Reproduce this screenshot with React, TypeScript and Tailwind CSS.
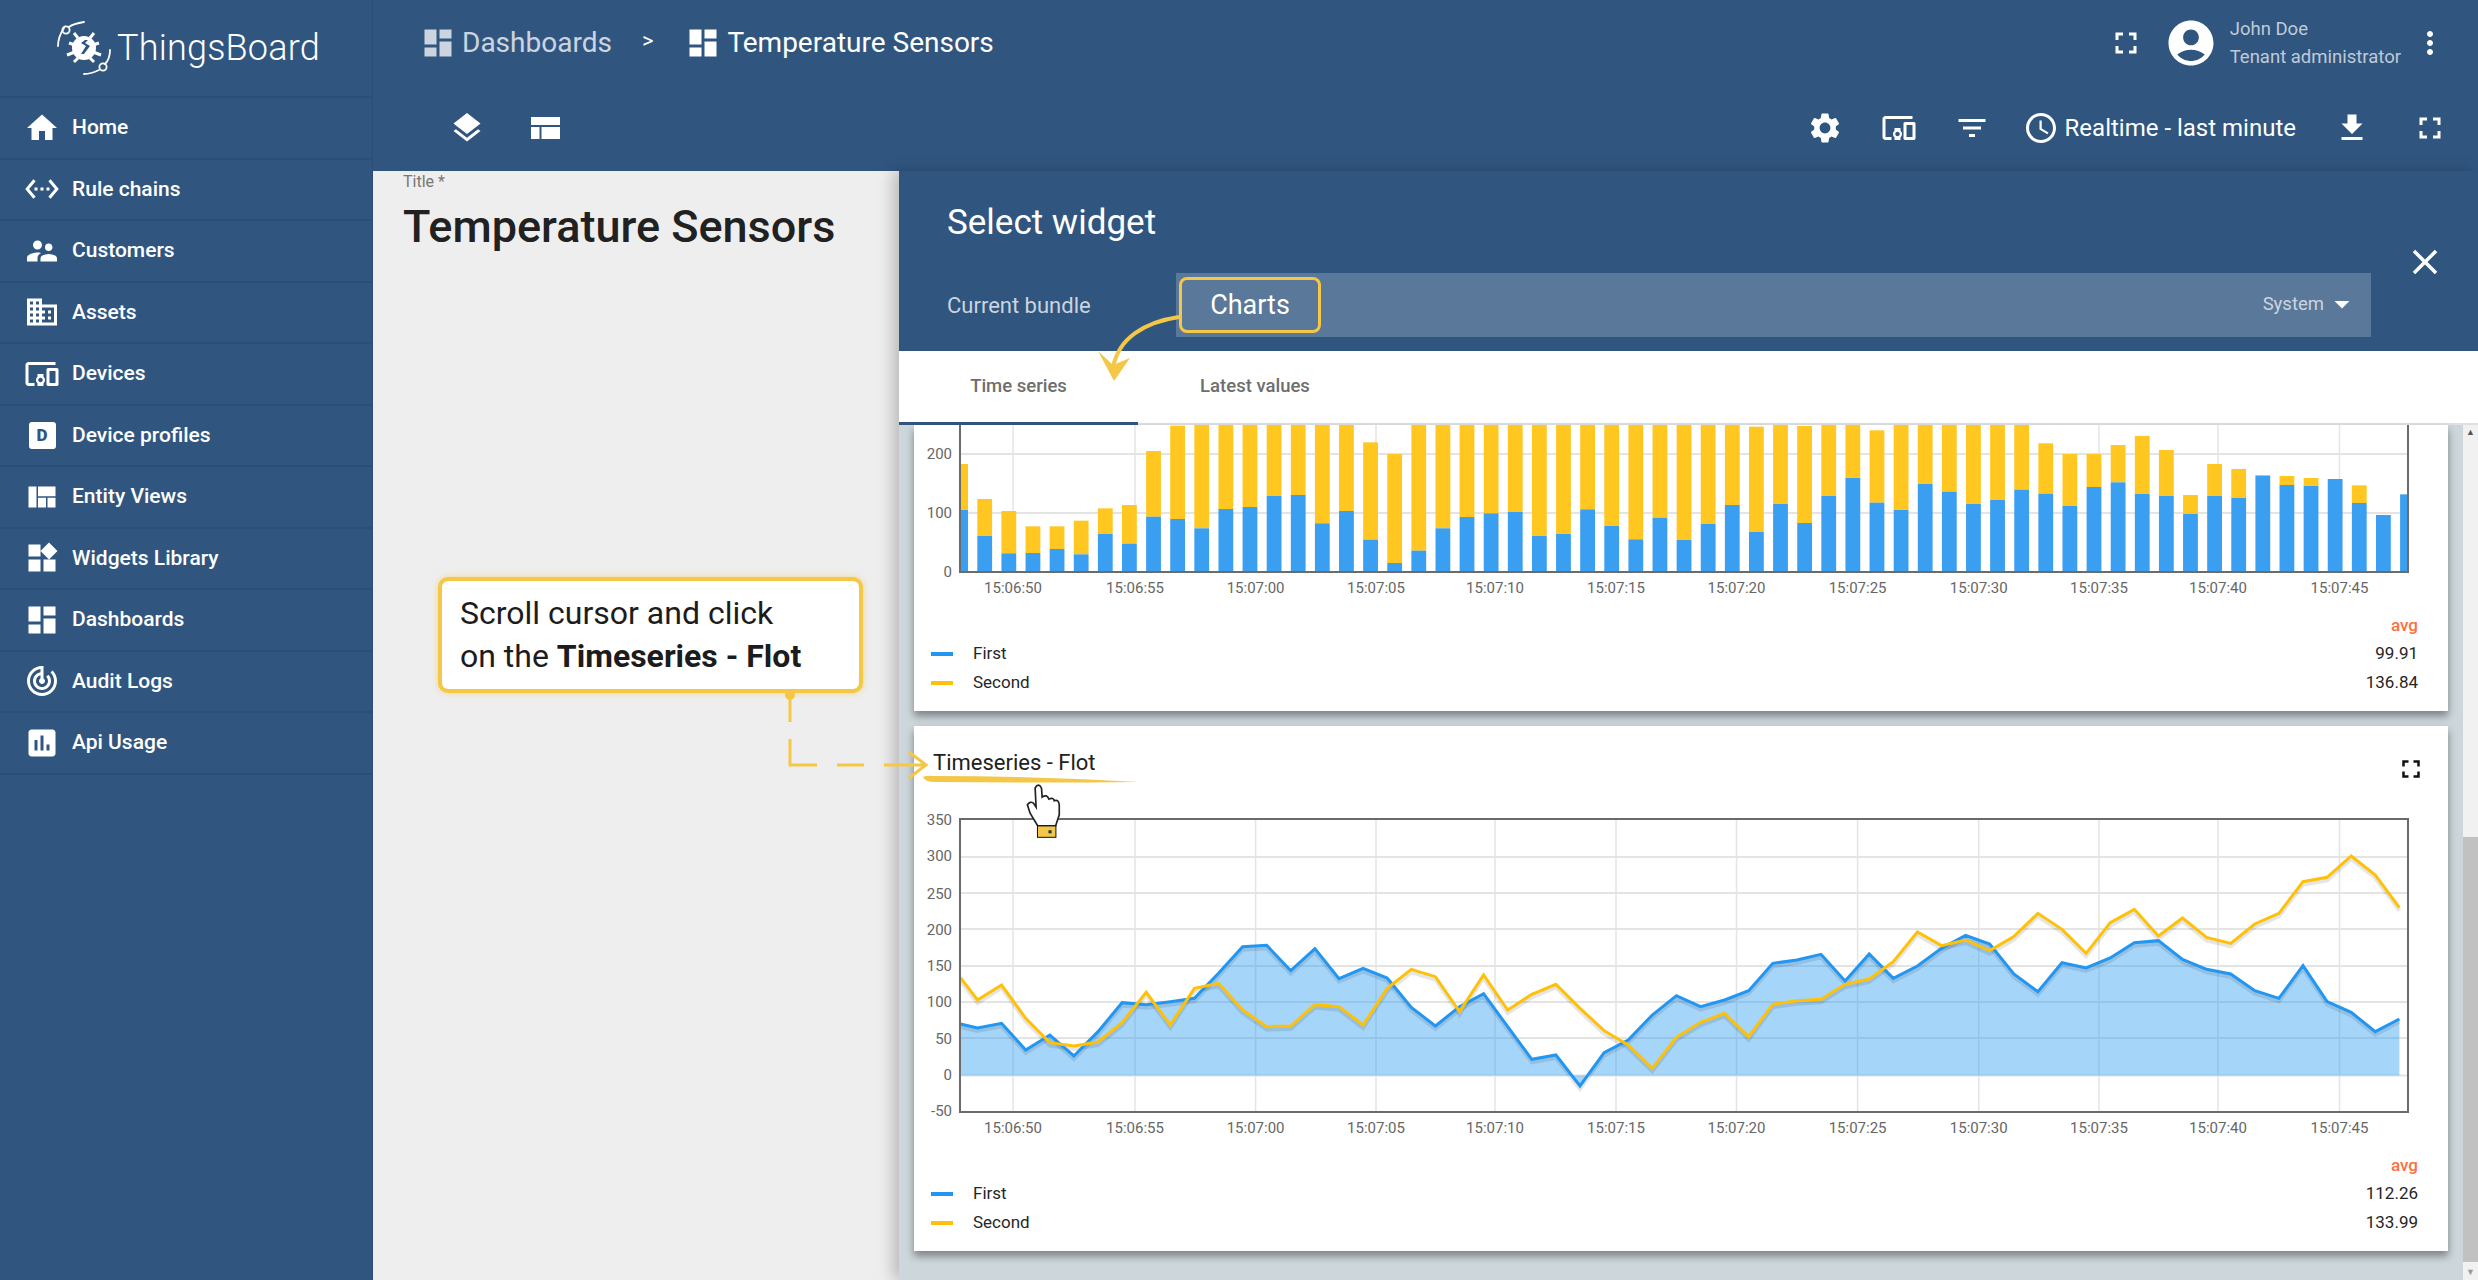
import React from 'react';
import {
  MdHome, MdSettingsEthernet, MdSupervisorAccount, MdDomain, MdDevicesOther, MdViewQuilt, MdWidgets,
  MdDashboard, MdTrackChanges, MdInsertChart, MdFullscreen, MdAccountCircle, MdMoreVert, MdSettings,
  MdFilterList, MdAccessTime, MdFileDownload, MdClose, MdLayers, MdArrowDropDown,
} from 'react-icons/md';

const NAV = [
  { label: 'Home', icon: <MdHome size={36} /> },
  { label: 'Rule chains', icon: <MdSettingsEthernet size={36} /> },
  { label: 'Customers', icon: <MdSupervisorAccount size={36} /> },
  { label: 'Assets', icon: <MdDomain size={36} /> },
  { label: 'Devices', icon: <MdDevicesOther size={36} /> },
  {
    label: 'Device profiles',
    icon: (
      <div className="w-[27px] h-[27px] rounded-[3px] bg-white flex items-center justify-center text-[#305680] text-[17px] font-black leading-none">
        D
      </div>
    ),
  },
  { label: 'Entity Views', icon: <MdViewQuilt size={36} /> },
  { label: 'Widgets Library', icon: <MdWidgets size={36} /> },
  { label: 'Dashboards', icon: <MdDashboard size={36} /> },
  { label: 'Audit Logs', icon: <MdTrackChanges size={36} /> },
  { label: 'Api Usage', icon: <MdInsertChart size={36} /> },
];

const TICKS = [
  [1013, '15:06:50'], [1135, '15:06:55'], [1255.6, '15:07:00'], [1376, '15:07:05'], [1495, '15:07:10'], [1616, '15:07:15'],
  [1736.5, '15:07:20'], [1857.6, '15:07:25'], [1978.7, '15:07:30'], [2099, '15:07:35'], [2218, '15:07:40'], [2339.5, '15:07:45'],
] as const;

// [top of blue, top of yellow] read off the reference, in px/3 from y=410
const BARS = [
  [300, 162], [378, 267], [430, 303], [429, 349], [417, 349], [433, 332], [372, 295], [401, 285], [320, 123], [327, 47],
  [355, 0], [297, 0], [291, 0], [258, 0], [255, 0], [340, 0], [303, 0], [389, 97], [459, 132], [422, 0],
  [355, 0], [321, 0], [310, 0], [306, 0], [378, 0], [372, 0], [298, 0], [348, 0], [388, 0], [323, 0],
  [390, 0], [342, 0], [285, 0], [366, 50], [282, 0], [339, 48], [258, 0], [204, 0], [278, 61], [300, 0],
  [222, 0], [245, 0], [282, 0], [270, 0], [239, 0], [251, 100], [288, 132], [231, 132], [217, 105], [252, 78],
  [258, 120], [312, 255], [258, 162], [264, 177], [197, 195], [225, 198], [228, 204], [207, 207], [279, 226], [315, 315],
  [253, 253],
];

const BLUE = [
  684, 670, 750, 705, 768, 695, 608, 614, 605, 595, 520, 440, 436, 512, 446, 536, 505, 534, 622, 678,
  620, 581, 680, 778, 765, 858, 758, 720, 645, 587, 620, 600, 572, 490, 480, 463, 543, 462, 535, 498,
  445, 406, 432, 522, 575, 488, 504, 474, 428, 422, 478, 508, 522, 572, 595, 497, 605, 637, 695, 657,
];
const YELLOW = [
  600, 555, 655, 728, 738, 726, 668, 577, 675, 565, 550, 630, 680, 678, 614, 620, 675, 565, 508, 530,
  635, 525, 630, 583, 553, 625, 692, 735, 805, 712, 667, 640, 710, 613, 602, 598, 553, 537, 485, 396,
  437, 420, 452, 410, 340, 388, 460, 368, 328, 408, 354, 412, 430, 372, 340, 245, 232, 168, 225, 323,
];

const linePoints = (vals: number[], startY: number) =>
  `960.5,${800 + startY / 3} ` + vals.map((v, i) => `${977.5 + 24.1 * i},${800 + v / 3}`).join(' ');

const BLUE_POINTS = linePoints(BLUE, 672);
const YELLOW_POINTS = linePoints(YELLOW, 533);
const AREA_POINTS = `960.5,1075.5 ${BLUE_POINTS} ${977.5 + 24.1 * 59},1075.5`;

const BarChart = () => (
  <svg viewBox="914 425 1534 175" className="block w-[1534px] h-[175px] shrink-0">
    {TICKS.map(([x]) => <line key={x} x1={x} x2={x} y1={425} y2={572} stroke="#e4e4e4" strokeWidth={1.5} />)}
    {[454, 513].map(y => <line key={y} x1={960} x2={2408} y1={y} y2={y} stroke="#e4e4e4" strokeWidth={2} />)}
    {BARS.map(([b, t], i) => {
      const cx = 960.6 + 24.115 * i;
      const x = Math.max(cx - 7.4, 960);
      const w = Math.min(cx + 7.4, 2408) - x;
      const blueY = 410 + b / 3;
      const yellowY = t === 0 ? 425 : 410 + t / 3;
      return (
        <g key={i}>
          <rect x={x} y={yellowY} width={w} height={Math.max(blueY - yellowY, 0)} fill="#ffc720" />
          <rect x={x} y={blueY} width={w} height={572 - blueY} fill="#3a9ff1" />
        </g>
      );
    })}
    <path d="M960 425V572H2408V425" fill="none" stroke="#6b6b6b" strokeWidth={2} />
    <g fontSize={15} fill="#666" textAnchor="end">
      <text x={952} y={459}>200</text>
      <text x={952} y={518}>100</text>
      <text x={952} y={577}>0</text>
    </g>
    <g fontSize={15} fill="#666" textAnchor="middle">
      {TICKS.map(([x, l]) => <text key={l} x={x} y={593}>{l}</text>)}
    </g>
  </svg>
);

const LineChart = () => (
  <svg viewBox="914 790 1534 350" className="block w-[1534px] h-[350px] shrink-0">
    {TICKS.map(([x]) => <line key={x} x1={x} x2={x} y1={819} y2={1112} stroke="#e4e4e4" strokeWidth={1.5} />)}
    {[857, 893, 929, 966, 1002, 1038, 1075.5].map(y => (
      <line key={y} x1={960} x2={2408} y1={y} y2={y} stroke="#e4e4e4" strokeWidth={2} />
    ))}
    <polygon points={AREA_POINTS} fill="#2196f3" fillOpacity={0.4} />
    <polyline points={BLUE_POINTS} transform="translate(0 3)" fill="none" stroke="#000" strokeOpacity={0.1} strokeWidth={4} />
    <polyline points={YELLOW_POINTS} transform="translate(0 3)" fill="none" stroke="#000" strokeOpacity={0.1} strokeWidth={4} />
    <polyline points={BLUE_POINTS} fill="none" stroke="#2196f3" strokeWidth={3} />
    <polyline points={YELLOW_POINTS} fill="none" stroke="#ffc107" strokeWidth={3} />
    <rect x={960} y={819} width={1448} height={293} fill="none" stroke="#6b6b6b" strokeWidth={2} />
    <g fontSize={15} fill="#666" textAnchor="end">
      {[['350', 825], ['300', 861], ['250', 899], ['200', 935], ['150', 971], ['100', 1007], ['50', 1044], ['0', 1080], ['-50', 1116]].map(([l, y]) => (
        <text key={l} x={952} y={y}>{l}</text>
      ))}
    </g>
    <g fontSize={15} fill="#666" textAnchor="middle">
      {TICKS.map(([x, l]) => <text key={l} x={x} y={1133}>{l}</text>)}
    </g>
  </svg>
);

const Legend = ({ first, second }: { first: string; second: string }) => (
  <div className="pl-[17px] pr-[30px] pt-[12px] text-[17px] text-[#262626]">
    <div className="h-[27px] flex items-center justify-end text-[#ff6e40] font-medium">avg</div>
    <div className="h-[29px] flex items-center">
      <span className="w-[22px] h-[4px] bg-[#2196f3]" />
      <span className="ml-[20px] flex-1">First</span>
      <span>{first}</span>
    </div>
    <div className="h-[30px] flex items-center">
      <span className="w-[22px] h-[4px] bg-[#ffc107]" />
      <span className="ml-[20px] flex-1">Second</span>
      <span>{second}</span>
    </div>
  </div>
);

const Logo = () => (
  <svg viewBox="0 0 54 54" className="w-[54px] h-[54px]" fill="none" stroke="#fff">
    <path d="M1 25C1 18 3 13 7 7M12 6C16 3 21 2 27 1" strokeWidth={1.8} strokeLinecap="round" />
    <circle cx="9" cy="9" r="3.6" strokeWidth={1.8} />
    <path d="M53 29C53 35 51 40 48 43M42 49C38 51 33 53 27 53" strokeWidth={1.8} strokeLinecap="round" />
    <circle cx="46" cy="46" r="3.6" strokeWidth={1.8} />
    <g strokeWidth={3}>
      <path d="M17 12L21 17M37 12L33 17M12 22L18 24M42 22L36 24M10 34L18 31M44 34L36 31M17 41L21 37M37 41L33 37" />
    </g>
    <circle cx="27" cy="27" r="12" fill="#fff" stroke="none" />
    <path d="M28 19L24 22L29 25L24 33L27 33L33 25L28 22L31 19Z" fill="#305680" stroke="none" />
  </svg>
);

const LayoutIcon = () => (
  <svg viewBox="0 0 29 22" className="w-[29px] h-[22px]" fill="#fff">
    <rect x="0" y="0" width="29" height="8" />
    <rect x="0" y="10" width="8.5" height="12" />
    <rect x="10.5" y="10" width="18.5" height="12" />
  </svg>
);

const HandCursor = () => (
  <svg viewBox="225 190 110 170" className="absolute left-[1025px] top-[783px] w-[37px] h-[57px]">
    <path
      d="M255 205Q265 188 274 205L276 232Q290 222 296 238Q310 232 312 243Q325 238 327 255L327 285L316 318L263 318L240 280L232 255Q240 243 250 250L258 262Z"
      fill="#fff"
      stroke="#222"
      strokeWidth={5}
    />
    <rect x="262" y="318" width="55" height="34" fill="#f4c747" stroke="#111" strokeWidth={3} />
    <rect x="295" y="331" width="9" height="9" fill="#134" />
  </svg>
);

export default function App() {
  return (
    <div className="relative w-full h-[1280px] flex overflow-hidden bg-[#eeeeee] font-['Roboto',sans-serif]">
      <aside className="w-[373px] shrink-0 bg-[#305680] border-r border-[#2b4f76] text-white flex flex-col">
        <div className="h-[98px] shrink-0 flex items-center pl-[57px] gap-[6px] border-b-2 border-[#2b4f76]">
          <Logo />
          <span className="text-[36px] font-light leading-none tracking-[0.2px]">ThingsBoard</span>
        </div>
        {NAV.map(item => (
          <div key={item.label} className="h-[61.5px] shrink-0 flex items-center border-b-2 border-[#2b4f76] pl-[24px]">
            <span className="w-[36px] h-[36px] flex items-center justify-center">{item.icon}</span>
            <span className="ml-[12px] text-[21px] font-medium leading-none">{item.label}</span>
          </div>
        ))}
      </aside>

      <div className="flex-1 min-w-0 flex flex-col">
        <header className="h-[171px] shrink-0 bg-[#305680] text-white flex flex-col">
          <div className="h-[85px] flex items-center pl-[47px] pr-[30px]">
            <MdDashboard size={36} className="opacity-75" />
            <span className="ml-[6px] text-[28px] opacity-75">Dashboards</span>
            <span className="ml-[30px] mb-[4px] text-[22px]">&gt;</span>
            <MdDashboard size={36} className="ml-[32px]" />
            <span className="ml-[6px] text-[28px]">Temperature Sensors</span>
            <div className="flex-1" />
            <MdFullscreen size={36} />
            <MdAccountCircle size={54} className="ml-[20px]" />
            <div className="ml-[12px] flex flex-col text-[18.5px] leading-[28px] text-white/70">
              <span>John Doe</span>
              <span>Tenant administrator</span>
            </div>
            <MdMoreVert size={36} className="ml-[11px]" />
          </div>
          <div className="h-[86px] flex items-center pl-[76px] pr-[30px]">
            <MdLayers size={36} />
            <div className="ml-[46px]"><LayoutIcon /></div>
            <div className="flex-1" />
            <MdSettings size={36} />
            <MdDevicesOther size={36} className="ml-[38px]" />
            <MdFilterList size={36} className="ml-[37px]" />
            <MdAccessTime size={36} className="ml-[33px]" />
            <span className="ml-[6px] text-[24px]">Realtime - last minute</span>
            <MdFileDownload size={36} className="ml-[38px]" />
            <MdFullscreen size={36} className="ml-[42px]" />
          </div>
        </header>

        <div className="flex-1 min-h-0 flex">
          <div className="w-[526px] shrink-0 pl-[30px] pt-[1px]">
            <div className="text-[16px] leading-[20px] text-[#777]">Title *</div>
            <div className="mt-[7px] text-[45px] leading-[56px] font-medium text-[#212121] whitespace-nowrap">Temperature Sensors</div>
          </div>

          <div className="flex-1 min-w-0 flex flex-col shadow-[-6px_0_14px_rgba(0,0,0,0.22)] z-10">
            <div className="relative h-[180px] shrink-0 bg-[#305680] text-white pl-[48px] pr-[107px]">
              <div className="h-[102px] flex items-center text-[35px] leading-none">Select widget</div>
              <div className="h-[64px] flex items-center">
                <span className="w-[229px] text-[22px] text-white/75">Current bundle</span>
                <div className="flex-1 h-full bg-[#5a7899] flex items-center pl-[3px] pr-[20px]">
                  <div className="w-[142px] h-[56px] rounded-[8px] border-[3px] border-[#f4c747] flex items-center justify-center text-[27px]">
                    Charts
                  </div>
                  <div className="flex-1" />
                  <span className="text-[18.5px] text-white/70">System</span>
                  <MdArrowDropDown size={36} className="-mr-[9px] -mt-[3px]" />
                </div>
              </div>
              <MdClose size={42} className="absolute right-[32px] top-[70px]" />
            </div>

            <div className="h-[74px] shrink-0 bg-white border-b-2 border-[#e0e0e0] flex text-[18.5px] font-medium text-[#6e6e6e]">
              <div className="w-[239px] flex items-center justify-center border-b-[3px] border-[#305680] -mb-[2px]">Time series</div>
              <div className="w-[234px] flex items-center justify-center">Latest values</div>
            </div>

            <div className="flex-1 min-h-0 flex bg-[#cdd6db]">
              <div className="flex-1 min-w-0 flex flex-col gap-[15px] px-[15px]">
                <div className="h-[286px] shrink-0 bg-white shadow-[0_5px_8px_rgba(0,0,0,0.4)]">
                  <BarChart />
                  <Legend first="99.91" second="136.84" />
                </div>
                <div className="h-[525px] shrink-0 bg-white shadow-[0_5px_8px_rgba(0,0,0,0.4)]">
                  <div className="h-[64px] flex items-start justify-between pl-[19px] pr-[22px] pt-[22px]">
                    <span className="text-[22px] leading-[30px] text-[#212121]">Timeseries - Flot</span>
                    <MdFullscreen size={30} className="mt-[6px] text-[#111]" />
                  </div>
                  <LineChart />
                  <Legend first="112.26" second="133.99" />
                </div>
              </div>
              <div className="w-[15px] shrink-0 bg-[#f1f1f1] flex flex-col items-center text-[#555] text-[9px] leading-[15px]">
                <span className="h-[15px]">▲</span>
                <div className="h-[397px]" />
                <div className="w-full h-[425px] bg-[#c1c1c1]" />
                <div className="flex-1" />
                <span className="h-[15px] text-[#999]">▼</span>
              </div>
            </div>
          </div>
        </div>
      </div>

      <div className="absolute left-[438px] top-[577px] w-[425px] h-[116px] z-20 rounded-[10px] border-[4px] border-[#f4c747] bg-white shadow-[0_0_6px_rgba(244,199,71,0.6)] pl-[18px] flex flex-col justify-center text-[32px] leading-[43px] text-[#1c1c1c] whitespace-nowrap">
        <div>Scroll cursor and click</div>
        <div>on the <b className="font-bold">Timeseries - Flot</b></div>
      </div>

      <svg viewBox="0 0 2478 1280" className="absolute inset-0 w-[2478px] h-[1280px] z-20 pointer-events-none" fill="none">
        <circle cx="790" cy="695" r="5" fill="#f4c747" />
        <path d="M790 695V722M790 739V765H817M837 765H864M884 765H925M909 752L926 765L909 778" stroke="#f4c747" strokeWidth={3} />
        <path d="M923 777Q926 775 935 776Q1040 776 1139 782Q1040 783 935 782Q925 782 923 777Z" fill="#f4c747" />
        <path d="M1179 317C1145 322 1118 338 1113 368" stroke="#f4c747" strokeWidth={4} />
        <path d="M1098 351L1113 365L1130 358L1114 381Z" fill="#f4c747" />
      </svg>

      <div className="absolute inset-0 z-30 pointer-events-none">
        <HandCursor />
      </div>
    </div>
  );
}
